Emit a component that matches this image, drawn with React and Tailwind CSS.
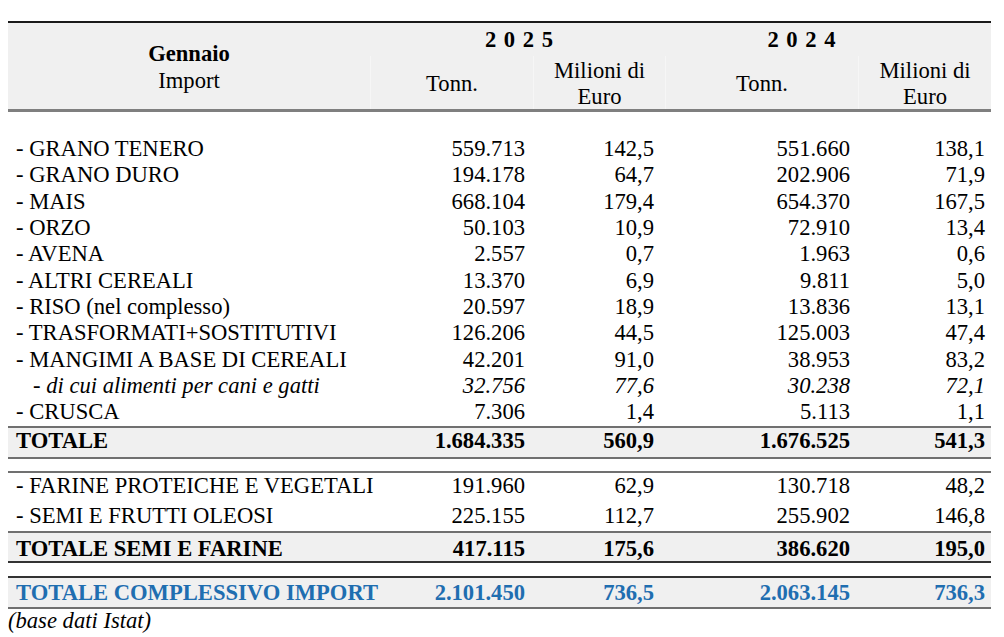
import React from 'react';

const cols = 'grid grid-cols-[362px_163px_132px_193px_133px]';

const cereali = [
  ['- GRANO TENERO', '559.713', '142,5', '551.660', '138,1'],
  ['- GRANO DURO', '194.178', '64,7', '202.906', '71,9'],
  ['- MAIS', '668.104', '179,4', '654.370', '167,5'],
  ['- ORZO', '50.103', '10,9', '72.910', '13,4'],
  ['- AVENA', '2.557', '0,7', '1.963', '0,6'],
  ['- ALTRI CEREALI', '13.370', '6,9', '9.811', '5,0'],
  ['- RISO (nel complesso)', '20.597', '18,9', '13.836', '13,1'],
  ['- TRASFORMATI+SOSTITUTIVI', '126.206', '44,5', '125.003', '47,4'],
  ['- MANGIMI A BASE DI CEREALI', '42.201', '91,0', '38.953', '83,2'],
  ['- di cui alimenti per cani e gatti', '32.756', '77,6', '30.238', '72,1', true],
  ['- CRUSCA', '7.306', '1,4', '5.113', '1,1'],
];

const semi = [
  ['- FARINE PROTEICHE E VEGETALI', '191.960', '62,9', '130.718', '48,2'],
  ['- SEMI E FRUTTI OLEOSI', '225.155', '112,7', '255.902', '146,8'],
];

// one line of the table: label + 4 right-aligned figures
const Row = ({ r, h, italic, bold, labelClass = 'pl-2', className = '' }) => (
  <div className={`${cols} ${className} ${italic ? 'italic' : ''} ${bold ? 'font-bold' : ''}`} style={{ height: h }}>
    <div className={`flex items-center ${labelClass} whitespace-nowrap`}>{r[0]}</div>
    <div className="flex items-center justify-end pr-2">{r[1]}</div>
    <div className="flex items-center justify-end pr-[11px]">{r[2]}</div>
    <div className="flex items-center justify-end pr-2">{r[3]}</div>
    <div className="flex items-center justify-end pr-[6px]">{r[4]}</div>
  </div>
);

export default function App() {
  return (
    <div className="min-h-screen bg-white pt-[21px] pl-[8px] text-black text-[22.6px] leading-[26px] font-['Liberation_Serif','Times_New_Roman',serif]">
      <div className="w-[983px]">
        {/* header */}
        <div className={`${cols} bg-[#f0f0f0] border-t-2 border-[#1a1a1a] border-b-[3px] border-b-[#7f7f7f]`}>
          <div className="row-span-2 flex flex-col items-center justify-center leading-[27px] pt-[1px]">
            <span className="font-bold">Gennaio</span>
            <span>Import</span>
          </div>
          <div className="col-span-2 h-[33px] flex items-center justify-center font-bold tracking-[1px] pl-[4px]">2 0 2 5</div>
          <div className="col-span-2 h-[33px] flex items-center justify-center font-bold tracking-[1px] pr-[52px]">2 0 2 4</div>
          <div className="h-[53px] flex items-center justify-center pt-[2px] border-l border-[#f6f6f6]">Tonn.</div>
          <div className="h-[53px] flex flex-col items-center justify-center text-center pt-[2px] border-l border-[#f6f6f6]">
            <span>Milioni di</span>
            <span>Euro</span>
          </div>
          <div className="h-[53px] flex items-center justify-center pt-[2px] border-l border-[#f6f6f6]">Tonn.</div>
          <div className="h-[53px] flex flex-col items-center justify-center text-center pt-[2px] border-l border-[#f6f6f6]">
            <span>Milioni di</span>
            <span>Euro</span>
          </div>
        </div>

        <div className="h-[24px]"></div>

        {cereali.map((r, i) => (
          <Row key={i} r={r} h="26.3px" italic={r[5]} labelClass={r[5] ? 'pl-[25px]' : 'pl-2'} />
        ))}

        <div className="border-t-2 border-b-2 border-[#707070] bg-[#f0f0f0] mt-[1px]">
          <Row r={['TOTALE', '1.684.335', '560,9', '1.676.525', '541,3']} h="29px" bold className="pb-[3px]" />
        </div>

        <div className="h-[12px]"></div>

        <div className="border-t-2 border-[#707070]">
          <Row r={semi[0]} h="29px" className="pb-[3px]" />
          <Row r={semi[1]} h="29px" className="pb-[2px]" />
        </div>

        <div className="border-t-2 border-b-2 border-t-[#707070] border-b-[#333] bg-[#f0f0f0]">
          <Row r={['TOTALE SEMI E FARINE', '417.115', '175,6', '386.620', '195,0']} h="28px" bold className="pt-[3px]" />
        </div>

        <div className="h-[13px]"></div>

        <div className="border-t-2 border-b-2 border-t-[#333] border-b-[#707070] bg-[#f0f0f0] text-[#1f6eb0]">
          <Row r={['TOTALE COMPLESSIVO IMPORT', '2.101.450', '736,5', '2.063.145', '736,3']} h="29px" bold />
        </div>

        <div className="italic leading-[24px]">(base dati Istat)</div>
      </div>
    </div>
  );
}
